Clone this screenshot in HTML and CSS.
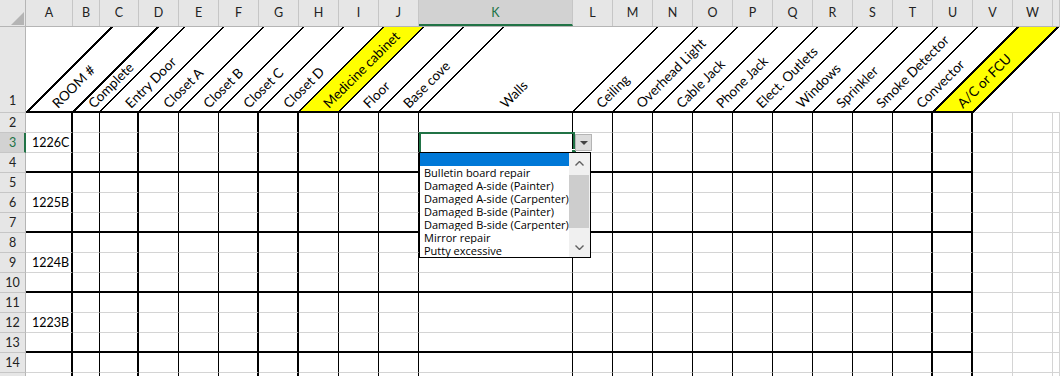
FILE: index.html
```html
<!DOCTYPE html>
<html>
<head>
<meta charset="utf-8">
<title>Sheet</title>
<link rel="stylesheet" href="styles.css">
</head>
<body>
<div class="sheet">
  <div class="colheads">
    <div class="corner"><span class="tri"></span></div>
    <div class="ch">A</div><div class="ch">B</div><div class="ch">C</div><div class="ch">D</div><div class="ch">E</div><div class="ch">F</div><div class="ch">G</div><div class="ch">H</div><div class="ch">I</div><div class="ch">J</div><div class="ch sel">K</div><div class="ch">L</div><div class="ch">M</div><div class="ch">N</div><div class="ch">O</div><div class="ch">P</div><div class="ch">Q</div><div class="ch">R</div><div class="ch">S</div><div class="ch">T</div><div class="ch">U</div><div class="ch">V</div><div class="ch">W</div><div class="ch"></div>
  </div>

  <div class="row1">
    <div class="rh rh-top">1</div>
    <div class="hdr1">
      <svg class="diag" width="1034" height="86" viewBox="26 27 1034 86">
        <polygon class="yel" points="298.5,112 338.5,112 423.5,27 383.5,27"/>
        <polygon class="yel" points="933,112 973,112 1058,27 1018,27"/>
        <g class="thin">
          <line x1="99.5" y1="112" x2="184.5" y2="27"/>
          <line x1="138.5" y1="112" x2="223.5" y2="27"/>
          <line x1="178.5" y1="112" x2="263.5" y2="27"/>
          <line x1="218.5" y1="112" x2="303.5" y2="27"/>
          <line x1="258.5" y1="112" x2="343.5" y2="27"/>
          <line x1="298.5" y1="112" x2="383.5" y2="27"/>
          <line x1="338.5" y1="112" x2="423.5" y2="27"/>
          <line x1="378.5" y1="112" x2="463.5" y2="27"/>
          <line x1="418.5" y1="112" x2="503.5" y2="27"/>
          <line x1="572.5" y1="112" x2="657.5" y2="27"/>
          <line x1="612.5" y1="112" x2="697.5" y2="27"/>
          <line x1="652.5" y1="112" x2="737.5" y2="27"/>
          <line x1="692.5" y1="112" x2="777.5" y2="27"/>
          <line x1="732.5" y1="112" x2="817.5" y2="27"/>
          <line x1="772.5" y1="112" x2="857.5" y2="27"/>
          <line x1="812.5" y1="112" x2="897.5" y2="27"/>
          <line x1="852.5" y1="112" x2="937.5" y2="27"/>
          <line x1="892.5" y1="112" x2="977.5" y2="27"/>
        </g>
        <g class="thick">
          <line x1="27" y1="112" x2="112" y2="27"/>
          <line x1="73" y1="112" x2="158" y2="27"/>
          <line x1="933" y1="112" x2="1018" y2="27"/>
          <line x1="973" y1="112" x2="1058" y2="27"/>
        </g>
        <rect class="base" x="26" y="111" width="948" height="2"/>
        <rect class="base-grid" x="974" y="112" width="86" height="1"/>
        <g class="lbl">
          <text transform="translate(58 109) rotate(-45)">ROOM #</text>
          <text transform="translate(94 109) rotate(-45)">Complete</text>
          <text transform="translate(131 109) rotate(-45)">Entry Door</text>
          <text transform="translate(169 109) rotate(-45)">Closet A</text>
          <text transform="translate(209 109) rotate(-45)">Closet B</text>
          <text transform="translate(249 109) rotate(-45)">Closet C</text>
          <text transform="translate(289 109) rotate(-45)">Closet D</text>
          <text transform="translate(329 109) rotate(-45)">Medicine cabinet</text>
          <text transform="translate(369 109) rotate(-45)">Floor</text>
          <text transform="translate(409 109) rotate(-45)">Base cove</text>
          <text transform="translate(506 109) rotate(-45)">Walls</text>
          <text transform="translate(602 109) rotate(-45)">Ceiling</text>
          <text transform="translate(642 109) rotate(-45)">Overhead Light</text>
          <text transform="translate(682 109) rotate(-45)">Cable Jack</text>
          <text transform="translate(722 109) rotate(-45)">Phone Jack</text>
          <text transform="translate(762 109) rotate(-45)">Elect. Outlets</text>
          <text transform="translate(802 109) rotate(-45)">Windows</text>
          <text transform="translate(842 109) rotate(-45)">Sprinkler</text>
          <text transform="translate(882 109) rotate(-45)">Smoke Detector</text>
          <text transform="translate(922 109) rotate(-45)">Convector</text>
          <text transform="translate(963 109) rotate(-45)">A/C or FCU</text>
        </g>
      </svg>
    </div>
  </div>

  <div class="row"><div class="rh">2</div><span></span><span></span><span></span><span></span><span></span><span></span><span></span><span></span><span></span><span></span><span></span><span></span><span></span><span></span><span></span><span></span><span></span><span></span><span></span><span></span><span></span><span></span><span></span><span></span></div>
  <div class="row"><div class="rh sel">3</div><span class="t">1226C</span><span></span><span></span><span></span><span></span><span></span><span></span><span></span><span></span><span></span><span></span><span></span><span></span><span></span><span></span><span></span><span></span><span></span><span></span><span></span><span></span><span></span><span></span><span></span></div>
  <div class="row end"><div class="rh">4</div><span></span><span></span><span></span><span></span><span></span><span></span><span></span><span></span><span></span><span></span><span></span><span></span><span></span><span></span><span></span><span></span><span></span><span></span><span></span><span></span><span></span><span></span><span></span><span></span></div>
  <div class="row"><div class="rh">5</div><span></span><span></span><span></span><span></span><span></span><span></span><span></span><span></span><span></span><span></span><span></span><span></span><span></span><span></span><span></span><span></span><span></span><span></span><span></span><span></span><span></span><span></span><span></span><span></span></div>
  <div class="row"><div class="rh">6</div><span class="t">1225B</span><span></span><span></span><span></span><span></span><span></span><span></span><span></span><span></span><span></span><span></span><span></span><span></span><span></span><span></span><span></span><span></span><span></span><span></span><span></span><span></span><span></span><span></span><span></span></div>
  <div class="row end"><div class="rh">7</div><span></span><span></span><span></span><span></span><span></span><span></span><span></span><span></span><span></span><span></span><span></span><span></span><span></span><span></span><span></span><span></span><span></span><span></span><span></span><span></span><span></span><span></span><span></span><span></span></div>
  <div class="row"><div class="rh">8</div><span></span><span></span><span></span><span></span><span></span><span></span><span></span><span></span><span></span><span></span><span></span><span></span><span></span><span></span><span></span><span></span><span></span><span></span><span></span><span></span><span></span><span></span><span></span><span></span></div>
  <div class="row"><div class="rh">9</div><span class="t">1224B</span><span></span><span></span><span></span><span></span><span></span><span></span><span></span><span></span><span></span><span></span><span></span><span></span><span></span><span></span><span></span><span></span><span></span><span></span><span></span><span></span><span></span><span></span><span></span></div>
  <div class="row end"><div class="rh">10</div><span></span><span></span><span></span><span></span><span></span><span></span><span></span><span></span><span></span><span></span><span></span><span></span><span></span><span></span><span></span><span></span><span></span><span></span><span></span><span></span><span></span><span></span><span></span><span></span></div>
  <div class="row"><div class="rh">11</div><span></span><span></span><span></span><span></span><span></span><span></span><span></span><span></span><span></span><span></span><span></span><span></span><span></span><span></span><span></span><span></span><span></span><span></span><span></span><span></span><span></span><span></span><span></span><span></span></div>
  <div class="row"><div class="rh">12</div><span class="t">1223B</span><span></span><span></span><span></span><span></span><span></span><span></span><span></span><span></span><span></span><span></span><span></span><span></span><span></span><span></span><span></span><span></span><span></span><span></span><span></span><span></span><span></span><span></span><span></span></div>
  <div class="row end"><div class="rh">13</div><span></span><span></span><span></span><span></span><span></span><span></span><span></span><span></span><span></span><span></span><span></span><span></span><span></span><span></span><span></span><span></span><span></span><span></span><span></span><span></span><span></span><span></span><span></span><span></span></div>
  <div class="row"><div class="rh">14</div><span></span><span></span><span></span><span></span><span></span><span></span><span></span><span></span><span></span><span></span><span></span><span></span><span></span><span></span><span></span><span></span><span></span><span></span><span></span><span></span><span></span><span></span><span></span><span></span></div>
  <div class="row"><div class="rh"></div><span></span><span></span><span></span><span></span><span></span><span></span><span></span><span></span><span></span><span></span><span></span><span></span><span></span><span></span><span></span><span></span><span></span><span></span><span></span><span></span><span></span><span></span><span></span><span></span></div>

  <div class="active-cell"></div>
  <div class="fill-handle"></div>
  <div class="dd-btn"><span class="dd-arrow"></span></div>
  <div class="dd-list">
    <div class="dd-items">
      <div class="dd-item hl">&nbsp;</div>
      <div class="dd-item">Bulletin board repair</div>
      <div class="dd-item">Damaged A-side (Painter)</div>
      <div class="dd-item">Damaged A-side (Carpenter)</div>
      <div class="dd-item">Damaged B-side (Painter)</div>
      <div class="dd-item">Damaged B-side (Carpenter)</div>
      <div class="dd-item">Mirror repair</div>
      <div class="dd-item">Putty excessive</div>
    </div>
    <div class="sbar">
      <div class="sb-btn"><svg width="9" height="5" viewBox="0 0 9 5"><polyline points="0.5,4.5 4.5,0.5 8.5,4.5"/></svg></div>
      <div class="sb-track"><div class="sb-thumb"></div></div>
      <div class="sb-btn"><svg width="9" height="5" viewBox="0 0 9 5"><polyline points="0.5,0.5 4.5,4.5 8.5,0.5"/></svg></div>
    </div>
  </div>
</div>
</body>
</html>
```

FILE: styles.css
```css
* { box-sizing: border-box; margin: 0; padding: 0; }

html, body {
  width: 1060px;
  height: 376px;
  overflow: hidden;
  background: #fff;
}

body {
  font-family: Lato, "Liberation Sans", sans-serif;
  font-size: 12px;
  color: #000;
}

.sheet {
  position: relative;
  width: 1060px;
  height: 376px;
  overflow: hidden;
}

.colheads,
.row1,
.row {
  display: grid;
  grid-template-columns: 26px 47px 27px 39px repeat(7, 40px) 154px repeat(12, 40px) 7px;
}

/* column headers */
.colheads {
  height: 27px;
  background: #e6e6e6;
  border-bottom: 1px solid #b5b5b5;
}

.corner {
  display: flex;
  align-items: flex-end;
  justify-content: flex-end;
  padding: 0 1px 1px 0;
  border-right: 1px solid #b5b5b5;
}

.tri {
  width: 13px;
  height: 13px;
  background: #b4b4b4;
  clip-path: polygon(100% 0, 100% 100%, 0 100%);
}

.ch {
  display: flex;
  align-items: center;
  justify-content: center;
  border-right: 1px solid #c6c6c6;
  color: #222;
  font-size: 12.5px;
  line-height: 16px;
}

.ch.sel {
  background: #d2d2d2;
  color: #217346;
  border-bottom: 2px solid #217346;
  padding-top: 2px;
}

/* row 1 with rotated headings */
.row1 {
  height: 86px;
}

.rh {
  background: #e6e6e6;
  border-right: 1px solid #b5b5b5;
  border-bottom: 1px solid #c6c6c6;
  display: flex;
  align-items: center;
  justify-content: center;
  color: #222;
  font-size: 12.5px;
  line-height: 16px;
}

.rh-top {
  align-items: flex-end;
  padding-bottom: 3px;
}

.rh.sel {
  background: #d2d2d2;
  color: #217346;
  border-right: 2px solid #217346;
  padding-left: 1px;
}

.hdr1 {
  grid-column: 2 / -1;
  background: #fff;
}

.diag {
  display: block;
}

.diag .yel { fill: #ffff00; }

.diag .thin line {
  stroke: #000;
  stroke-width: 1;
  shape-rendering: crispEdges;
}

.diag .thick line {
  stroke: #000;
  stroke-width: 2;
  shape-rendering: crispEdges;
}

.diag .base { fill: #000; }
.diag .base-grid { fill: #d4d4d4; }

.diag .lbl text {
  font-family: Lato, "Liberation Sans", sans-serif;
  font-size: 13.5px;
  fill: #000;
}

/* body rows */
.row {
  height: 20px;
}

.row > span {
  display: block;
  border-right: 1px solid #000;
  border-bottom: 1px solid #d4d4d4;
}

.row > span:nth-child(n+23) {
  border-right-color: #d4d4d4;
}

.row > span:nth-child(2),
.row > span:nth-child(4),
.row > span:nth-child(7),
.row > span:nth-child(8),
.row > span:nth-child(21),
.row > span:nth-child(22) {
  border-right-width: 2px;
}

.row.end > span:nth-child(-n+22) {
  border-bottom: 2px solid #000;
}

.row > span.t {
  padding-left: 6px;
  font-size: 12.5px;
  line-height: 19px;
  white-space: nowrap;
}

/* active cell & validation dropdown */
.active-cell {
  position: absolute;
  left: 419px;
  top: 132px;
  width: 156px;
  height: 22px;
  border: 2px solid #217346;
}

.fill-handle {
  position: absolute;
  left: 571px;
  top: 149px;
  width: 6px;
  height: 6px;
  background: #217346;
  border: 1px solid #fff;
}

.dd-btn {
  position: absolute;
  left: 575px;
  top: 134px;
  width: 17px;
  height: 17px;
  background: #dcdcdc;
  border: 1px solid #b4b4b4;
  display: flex;
  align-items: center;
  justify-content: center;
}

.dd-arrow {
  width: 0;
  height: 0;
  border-left: 4px solid transparent;
  border-right: 4px solid transparent;
  border-top: 4px solid #444;
  margin-top: 1px;
}

.dd-list {
  position: absolute;
  left: 419px;
  top: 152px;
  width: 172px;
  height: 106px;
  border: 1px solid #000;
  background: #fff;
  display: flex;
}

.dd-items {
  flex: 1;
  font-family: "Open Sans", "Noto Sans", sans-serif;
  font-size: 11px;
  line-height: 13px;
  color: #000;
}

.dd-item {
  height: 13px;
  padding-left: 4px;
  white-space: nowrap;
  overflow: hidden;
}

.dd-item.hl {
  background: #0078d7;
}

.sbar {
  width: 21px;
  background: #f0f0f0;
  display: flex;
  flex-direction: column;
}

.sb-btn {
  height: 20px;
  display: flex;
  align-items: center;
  justify-content: center;
}

.sb-btn svg polyline {
  fill: none;
  stroke: #606060;
  stroke-width: 1.4;
}

.sb-track {
  flex: 1;
  padding: 2px 1px 0 0;
}

.sb-thumb {
  height: 53px;
  background: #cdcdcd;
}
```
